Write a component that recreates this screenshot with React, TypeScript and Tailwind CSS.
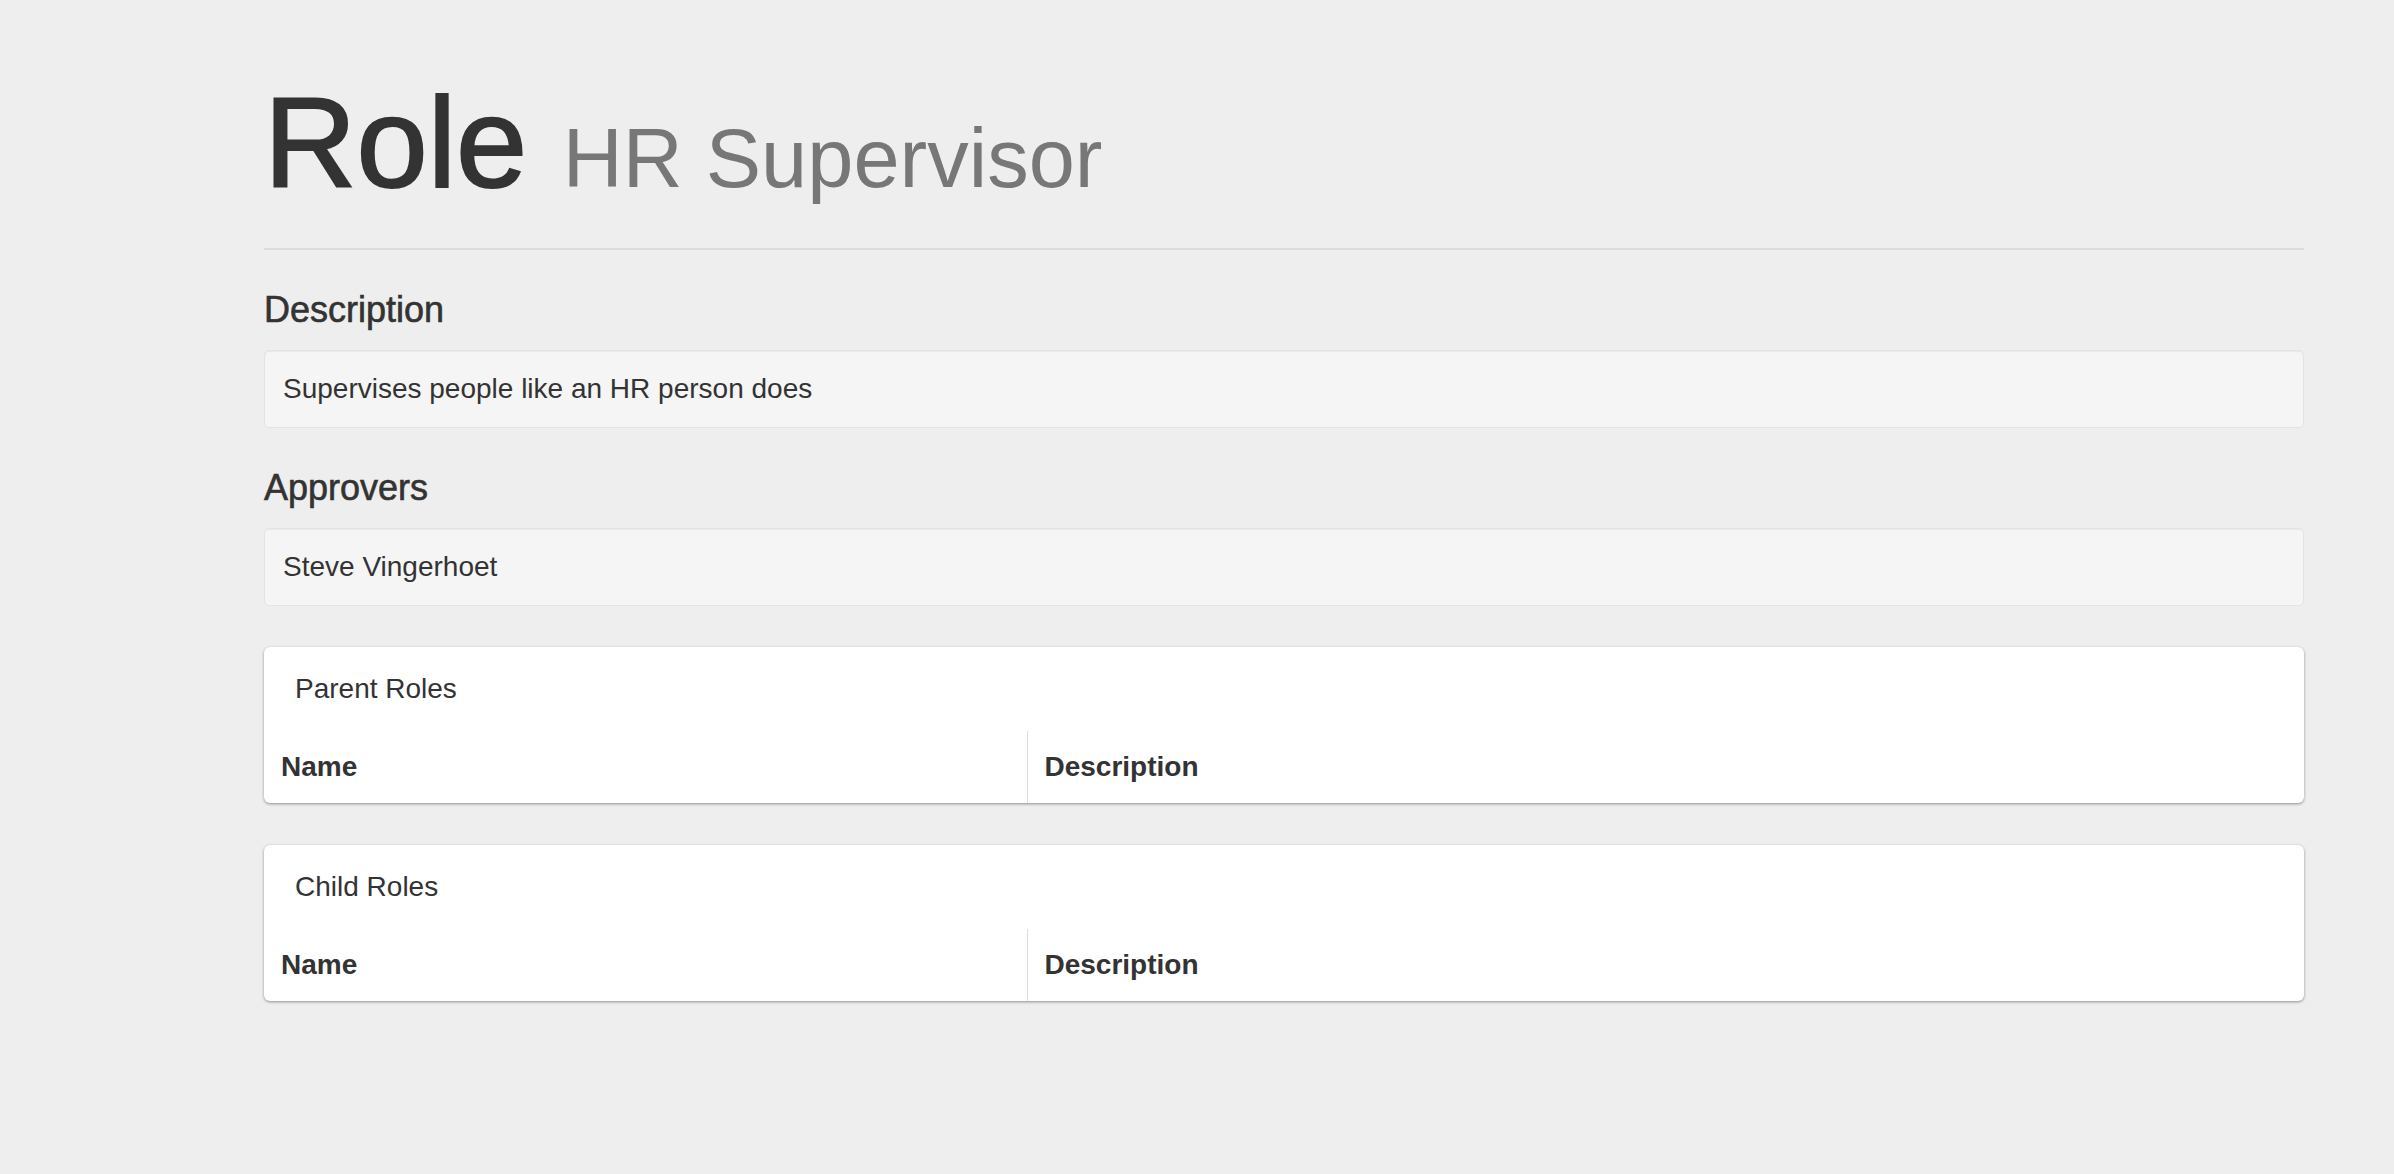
import { ReactNode } from "react";

const sans = "[font-family:'Liberation_Sans',Arial,Helvetica,sans-serif]";

function SectionHeading({ children }: { children: ReactNode }) {
  return (
    <h3 className="mt-[40px] text-[36px] leading-[40px] font-normal text-[#333333] [-webkit-text-stroke:0.6px_#333333]">
      {children}
    </h3>
  );
}

function Well({ children }: { children: ReactNode }) {
  return (
    <div className="mt-[20px] rounded-[5px] border border-[#e3e3e3] bg-[#f5f5f5] p-[18px] text-[28px] leading-[40px] text-[#333333] shadow-[inset_0_1px_1px_rgba(0,0,0,0.05)]">
      {children}
    </div>
  );
}

function RolesCard({ title }: { title: string }) {
  return (
    <div className="rounded-[6px] bg-white shadow-[0_1px_3px_rgba(0,0,0,0.4)]">
      <div className="py-[22px] pl-[31px] text-[28px] leading-[40px] text-[#333333]">{title}</div>
      <table className="w-full table-fixed border-collapse">
        <thead>
          <tr>
            <th className="w-[763px] px-[17px] py-[16px] text-left text-[28px] leading-[40px] font-bold text-[#333333]">
              Name
            </th>
            <th className="border-l border-[#dddddd] px-[17px] py-[16px] text-left text-[28px] leading-[40px] font-bold text-[#333333]">
              Description
            </th>
          </tr>
        </thead>
        <tbody />
      </table>
    </div>
  );
}

export default function App() {
  return (
    <div className={`min-h-screen bg-[#eeeeee] ${sans}`}>
      <div className="ml-[264px] w-[2040px] pt-[72px] pb-[120px]">
        <div className="border-b-2 border-[#dcdcdc] pb-[35px]">
          <h1 className="h-[141px] text-[128px] leading-[141px] font-normal text-[#333333]">
            <span className="[-webkit-text-stroke:2px_#333333]">Role</span>{" "}
            <small className="text-[83px] leading-none text-[#777777]">HR Supervisor</small>
          </h1>
        </div>

        <SectionHeading>Description</SectionHeading>
        <Well>Supervises people like an HR person does</Well>

        <SectionHeading>Approvers</SectionHeading>
        <Well>Steve Vingerhoet</Well>

        <div className="mt-[41px] flex flex-col gap-[42px]">
          <RolesCard title="Parent Roles" />
          <RolesCard title="Child Roles" />
        </div>
      </div>
    </div>
  );
}
